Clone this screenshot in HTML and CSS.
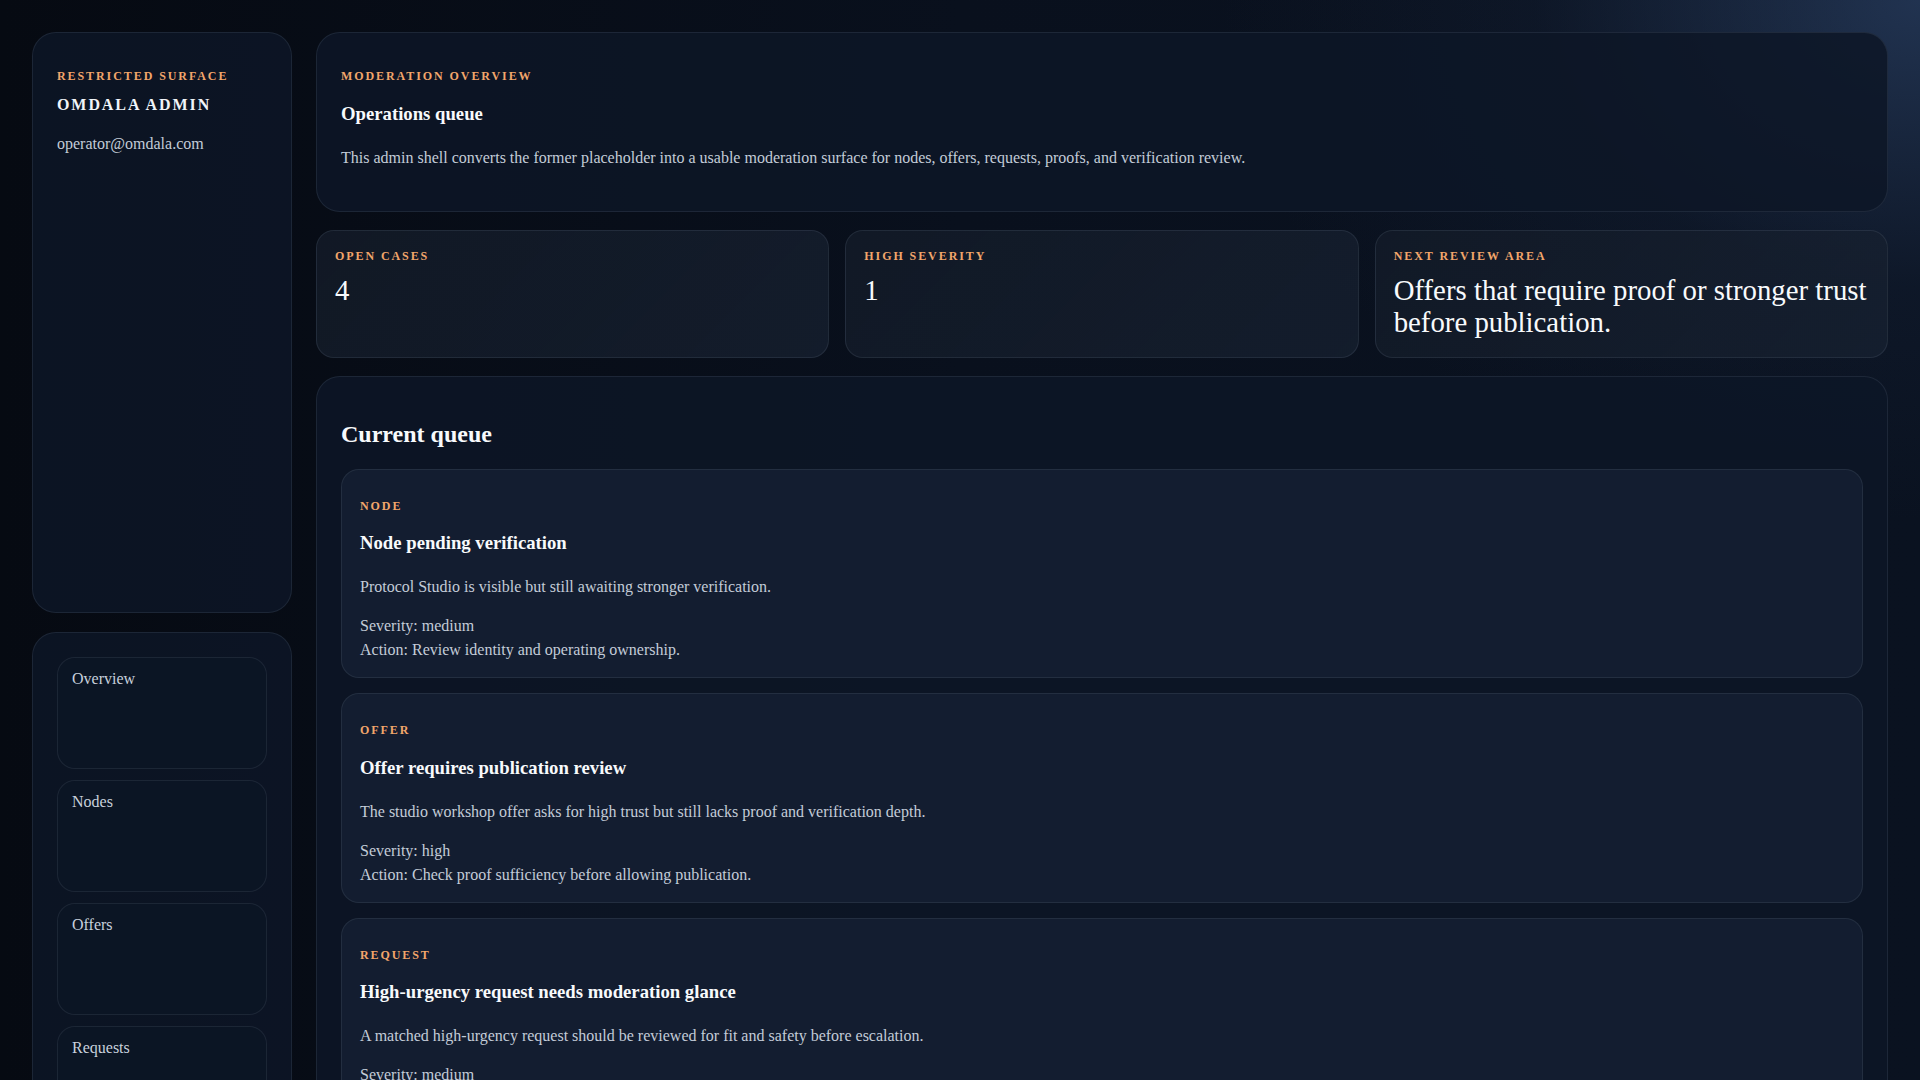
FILE: index.html
```html
<!DOCTYPE html>
<html lang="en">
<head>
<meta charset="utf-8">
<title>Omdala Admin — Operations queue</title>
<link rel="stylesheet" href="styles.css">
</head>
<body>
<div class="shell">
  <aside class="sidebar">
    <section class="card brand-card">
      <p class="eyebrow">Restricted surface</p>
      <p class="brand-name">OMDALA ADMIN</p>
      <p class="brand-email">operator@omdala.com</p>
    </section>
    <nav class="card nav-card">
      <a class="nav-item">Overview</a>
      <a class="nav-item">Nodes</a>
      <a class="nav-item">Offers</a>
      <a class="nav-item">Requests</a>
    </nav>
  </aside>

  <main class="main">
    <section class="card overview">
      <p class="eyebrow">Moderation overview</p>
      <h3 class="title">Operations queue</h3>
      <p class="desc overview-desc">This admin shell converts the former placeholder into a usable moderation surface for nodes, offers, requests, proofs, and verification review.</p>
    </section>

    <section class="stats">
      <div class="stat">
        <p class="eyebrow stat-label">Open cases</p>
        <p class="stat-value">4</p>
      </div>
      <div class="stat">
        <p class="eyebrow stat-label">High severity</p>
        <p class="stat-value">1</p>
      </div>
      <div class="stat">
        <p class="eyebrow stat-label">Next review area</p>
        <p class="stat-value">Offers that require proof or stronger trust before publication.</p>
      </div>
    </section>

    <section class="card queue">
      <h2 class="queue-title">Current queue</h2>
      <div class="queue-list">
        <article class="item">
          <p class="eyebrow">Node</p>
          <h3 class="title">Node pending verification</h3>
          <p class="desc">Protocol Studio is visible but still awaiting stronger verification.</p>
          <div class="meta">
            <div>Severity: medium</div>
            <div>Action: Review identity and operating ownership.</div>
          </div>
        </article>
        <article class="item">
          <p class="eyebrow">Offer</p>
          <h3 class="title">Offer requires publication review</h3>
          <p class="desc">The studio workshop offer asks for high trust but still lacks proof and verification depth.</p>
          <div class="meta">
            <div>Severity: high</div>
            <div>Action: Check proof sufficiency before allowing publication.</div>
          </div>
        </article>
        <article class="item">
          <p class="eyebrow">Request</p>
          <h3 class="title">High-urgency request needs moderation glance</h3>
          <p class="desc">A matched high-urgency request should be reviewed for fit and safety before escalation.</p>
          <div class="meta">
            <div>Severity: medium</div>
            <div>Action: Confirm request fit and safety before escalation.</div>
          </div>
        </article>
      </div>
    </section>
  </main>
</div>
</body>
</html>
```

FILE: styles.css
```css
* {
  box-sizing: border-box;
}

html, body {
  margin: 0;
  min-height: 100%;
}

body {
  font-family: "Liberation Serif", "Times New Roman", serif;
  color: #f8fafc;
  background-color: #070c16;
  background-image:
    radial-gradient(ellipse 700px 520px at 100% 0%, rgba(52, 78, 120, 0.55), rgba(30, 45, 72, 0.2) 55%, transparent 100%),
    linear-gradient(90deg, #060a12 0%, #09101d 50%, #0a1220 100%);
  background-repeat: no-repeat;
  min-height: 100vh;
}

.shell {
  display: grid;
  grid-template-columns: 260px 1fr;
  gap: 24px;
  padding: 32px;
  align-items: start;
}

.card {
  background: rgba(13, 22, 39, 0.86);
  border: 1px solid rgba(148, 163, 184, 0.13);
  border-radius: 24px;
  padding: 24px;
}

.eyebrow {
  margin: 12px 0 0;
  font-size: 12px;
  font-weight: 700;
  letter-spacing: 0.16em;
  text-transform: uppercase;
  color: #f2a66b;
}

/* Sidebar */
.sidebar {
  display: flex;
  flex-direction: column;
  gap: 19px;
}

.brand-card {
  height: 581px;
}

.brand-name {
  margin: 12px 0 0;
  font-size: 16px;
  font-weight: 700;
  letter-spacing: 0.12em;
  color: #f1f5f9;
}

.brand-email {
  margin: 16px 0 0;
  font-size: 16px;
  line-height: 28.8px;
  color: #c3ccd8;
}

.nav-card {
  display: flex;
  flex-direction: column;
  gap: 11px;
  padding-bottom: 40px;
}

.nav-item {
  display: block;
  height: 112px;
  padding: 12px 14px;
  border: 1px solid rgba(148, 163, 184, 0.12);
  border-radius: 18px;
  background: rgba(12, 21, 37, 0.6);
  font-size: 16px;
  color: #c8d1dd;
  text-decoration: none;
}

/* Main */
.main {
  display: flex;
  flex-direction: column;
  gap: 18.6px;
  min-width: 0;
}

.title {
  margin: 18.5px 0 0;
  font-size: 18.72px;
  font-weight: 700;
  color: #f8fafc;
}

.overview .title {
  margin-top: 19px;
}

.desc {
  margin: 19px 0 0;
  font-size: 16px;
  line-height: 28.8px;
  color: #c3ccd8;
}

.overview-desc {
  margin-top: 19px;
  margin-bottom: 14px;
}

.stats {
  display: grid;
  grid-template-columns: repeat(3, 1fr);
  gap: 16px;
}

.stat {
  padding: 18px 14px 18px 18px;
  border: 1px solid rgba(148, 163, 184, 0.13);
  border-radius: 18px;
  background: linear-gradient(135deg, rgba(19, 27, 40, 0.85), rgba(24, 34, 50, 0.7));
}

.stat-label {
  margin: 0;
}

.stat-value {
  margin: 9.5px 0 0;
  font-size: 28.8px;
  line-height: 32.5px;
  font-weight: 400;
  color: #f8fafc;
}

.queue-title {
  margin: 19.5px 0 0;
  font-size: 24px;
  font-weight: 700;
  color: #f8fafc;
}

.queue-list {
  margin-top: 21px;
  display: flex;
  flex-direction: column;
  gap: 15px;
}

.item {
  padding: 18px 18px 15px;
  border: 1px solid rgba(148, 163, 184, 0.12);
  border-radius: 18px;
  background: rgba(22, 33, 52, 0.72);
}

.item .eyebrow {
  margin-top: 11px;
}

.meta {
  margin-top: 12px;
  font-size: 16px;
  line-height: 24px;
  color: #c3ccd8;
}
```
